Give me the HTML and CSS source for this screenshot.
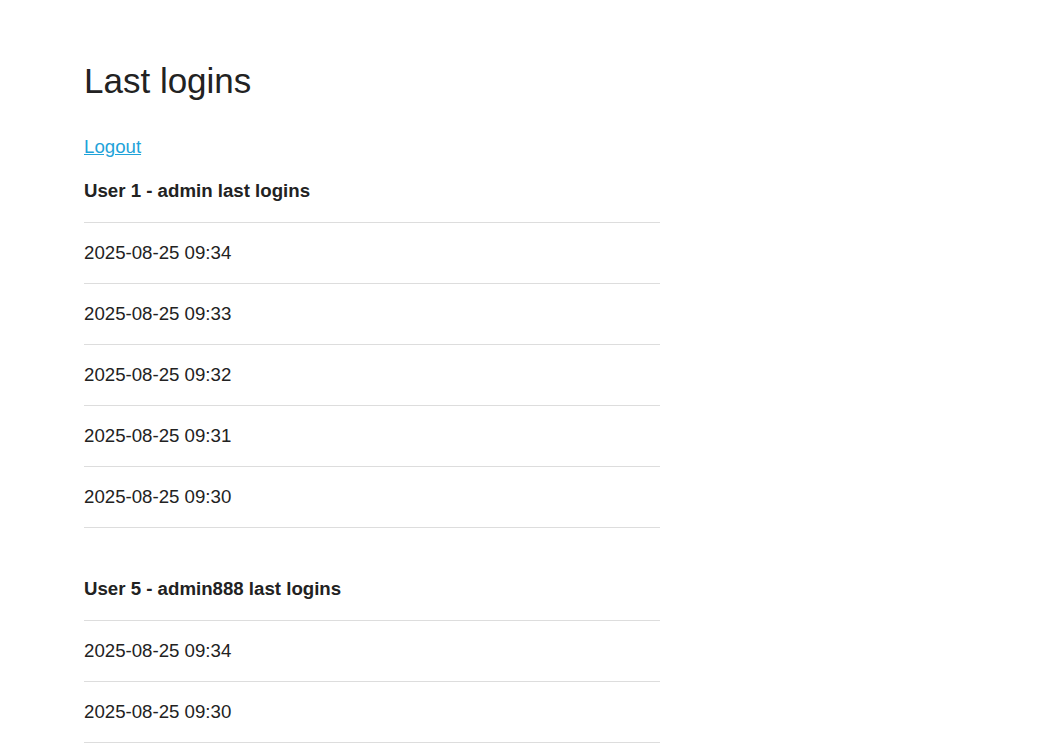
FILE: index.html
```html
<!DOCTYPE html>
<html lang="en">
<head>
  <meta charset="UTF-8" />
  <title>Last logins</title>
  <link rel="stylesheet" href="styles.css">
</head>
<body>

<div class="page">
  <h1>Last logins</h1>

  <a href="#" class="logout">Logout</a>

  <section class="user-logins">
    <h3>User 1 - admin last logins</h3>
    <ul>
      <li>2025-08-25 09:34</li>
      <li>2025-08-25 09:33</li>
      <li>2025-08-25 09:32</li>
      <li>2025-08-25 09:31</li>
      <li>2025-08-25 09:30</li>
    </ul>
  </section>

  <section class="user-logins">
    <h3>User 5 - admin888 last logins</h3>
    <ul>
      <li>2025-08-25 09:34</li>
      <li>2025-08-25 09:30</li>
    </ul>
  </section>
</div>

</body>
</html>
```

FILE: styles.css
```css
* {
  margin: 0;
  padding: 0;
  box-sizing: border-box;
}

body {
  font-family: "Liberation Sans", Arial, sans-serif;
  font-size: 18.67px;
  color: #222;
  background: #fff;
}

.page {
  width: 576px;
  margin-left: 84px;
  padding-top: 59px;
}

h1 {
  font-size: 35px;
  font-weight: normal;
  line-height: 44px;
  margin-bottom: 32px;
}

.logout {
  display: block;
  width: max-content;
  color: #1fa3d9;
  line-height: 24px;
}

.user-logins {
  margin-bottom: 29px;
}

.user-logins h3 {
  font-size: 18.67px;
  font-weight: bold;
  line-height: 24px;
  padding: 20px 0 19px;
  border-bottom: 1px solid #ddd;
}

.user-logins ul {
  list-style: none;
}

.user-logins li {
  line-height: 28px;
  padding: 16px 0;
  border-bottom: 1px solid #ddd;
}
```
